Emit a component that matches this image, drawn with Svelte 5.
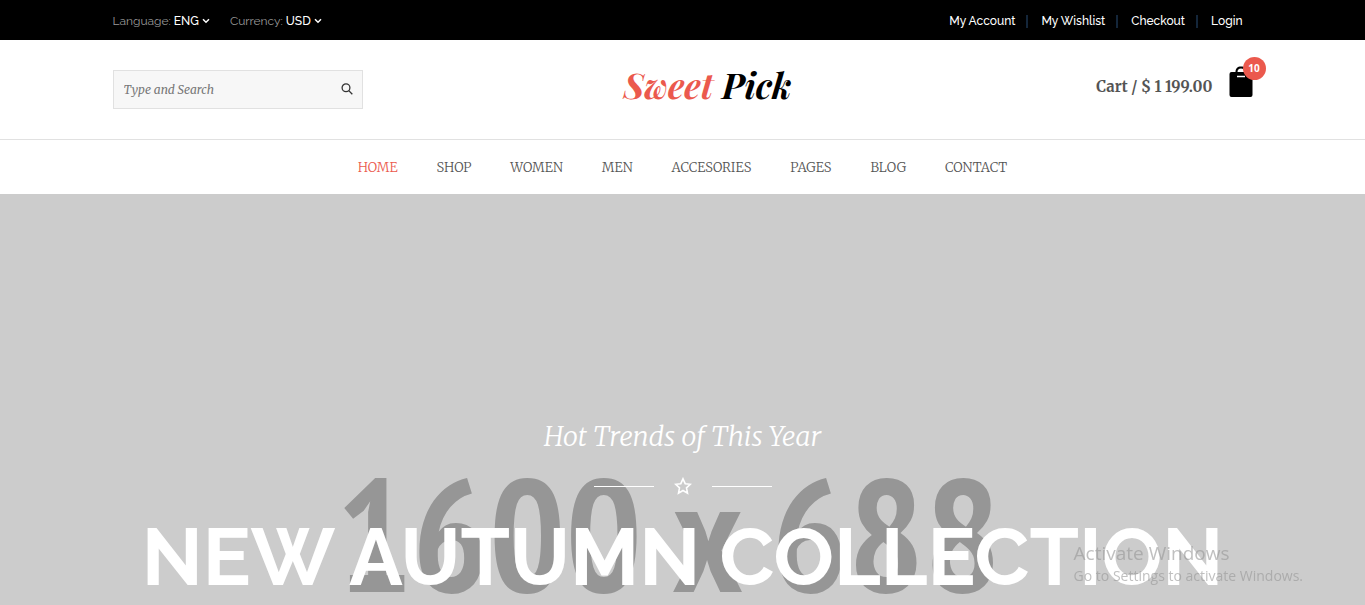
<script>
  const pickers = [
    { id: 'language', label: 'Language:', options: ['ENG', 'GER', 'FRA'] },
    { id: 'currency', label: 'Currency:', options: ['USD', 'EUR', 'GBP'] }
  ];
  const account = ['My Account', 'My Wishlist', 'Checkout', 'Login'];
  const menu = ['Home', 'Shop', 'Women', 'Men', 'Accesories', 'Pages', 'Blog', 'Contact'];
</script>

<div class="page">
  <div class="topbar">
    <div class="container topbar-row">
      <div class="pickers">
        {#each pickers as p}
          <div class="picker">
            <label for={p.id}>{p.label}</label>
            <select id={p.id}>
              {#each p.options as o}<option>{o}</option>{/each}
            </select>
            <svg class="chevron" viewBox="0 0 8 6" aria-hidden="true"><path d="M1 1.2 4 4.2 7 1.2" /></svg>
          </div>
        {/each}
      </div>
      <ul class="account">
        {#each account as a}<li><a href="#top">{a}</a></li>{/each}
      </ul>
    </div>
  </div>

  <header>
    <div class="container header-row">
      <form class="search" onsubmit={(e) => e.preventDefault()}>
        <input type="search" placeholder="Type and Search" aria-label="Search" />
        <button type="submit" aria-label="Submit search">
          <svg viewBox="0 0 12 12" aria-hidden="true"><circle cx="5" cy="4.8" r="3.9" /><path d="m7.8 7.6 3.5 3.6" /></svg>
        </button>
      </form>
      <a class="logo" href="#top"><span>Sweet</span> Pick</a>
      <a class="cart" href="#top">
        <span>Cart / $ 1 199.00</span>
        <span class="bag">
          <svg viewBox="0 0 24 32" aria-hidden="true">
            <path d="M2.5 7H6.5C6.5 3.5 8.5 1.5 12 1.5S17.5 3.5 17.5 7H21.5Q23.5 7 23.5 9V30Q23.5 32 21.5 32H2.5Q.5 32 .5 30V9Q.5 7 2.5 7ZM8.5 7H15.5C15.5 4.7 14.3 3.5 12 3.5S8.5 4.7 8.5 7Z" fill-rule="evenodd" />
            <path d="M8 11.5h8" stroke="#fff" stroke-width="1.5" />
          </svg>
          <b class="count">10</b>
        </span>
      </a>
    </div>
  </header>

  <nav aria-label="Main">
    <ul>
      {#each menu as m, i}<li><a href="#top" class:active={i === 0}>{m}</a></li>{/each}
    </ul>
  </nav>

  <main class="hero">
    <div class="dimensions">1600 x 688</div>
    <div class="caption">
      <p>Hot Trends of This Year</p>
      <div class="divider">
        <svg viewBox="0 0 18 18" aria-hidden="true"><path d="m9 1.8 2.2 4.9 5.1.6-3.8 3.5 1 5.3L9 13.5l-4.5 2.6 1-5.3L1.7 7.3l5.1-.6Z" /></svg>
      </div>
      <h1>NEW AUTUMN COLLECTION</h1>
    </div>
  </main>

  <aside class="notice">
    <strong>Activate Windows</strong>
    <span>Go to Settings to activate Windows.</span>
  </aside>
</div>

<style>
  :global(body) { margin: 0; }
  .page {
    display: flex;
    flex-direction: column;
    min-height: 100vh;
    background: #fff;
    color: #545454;
    font-family: Raleway, Lato, sans-serif;
    font-size: 12px;
  }
  a { color: inherit; text-decoration: none; }
  ul { display: flex; margin: 0; padding: 0; list-style: none; }
  svg { display: block; }
  .container { box-sizing: border-box; width: 100%; max-width: 1140px; margin: 0 auto; }

  .topbar { background: #000; color: #fff; }
  .topbar-row {
    display: flex;
    justify-content: space-between;
    align-items: center;
    min-height: 40px;
    padding-top: 2px;
    box-sizing: border-box;
  }
  .pickers { display: flex; gap: 20px; }
  .picker { display: flex; align-items: center; gap: 3px; }
  .picker label { color: #999; }
  select {
    appearance: none;
    field-sizing: content;
    margin: 0;
    padding: 0;
    border: 0;
    background: #000;
    color: #fff;
    font: inherit;
    font-weight: 500;
  }
  .chevron { width: 8px; height: 6px; fill: none; stroke: #fff; stroke-width: 1.5; }
  .account { padding-right: 10px; font-weight: 500; }
  .account li { line-height: 13px; }
  .account li + li { margin-left: 11px; padding-left: 13px; border-left: 2px solid #14263a; }

  .header-row {
    display: grid;
    grid-template-columns: 250px 1fr 200px;
    align-items: center;
    min-height: 99px;
  }
  .search {
    display: flex;
    box-sizing: border-box;
    height: 39px;
    border: 1px solid #e1e1e1;
    background: #f7f7f7;
  }
  .search input {
    flex: 1;
    min-width: 0;
    padding: 0 10px;
    border: 0;
    background: none;
    font: italic 12px Merriweather, "Liberation Serif", serif;
  }
  .search input::placeholder { color: #777; }
  .search button { padding: 0 9px 2px; border: 0; background: none; }
  .search svg { width: 12px; height: 12px; fill: none; stroke: #333; stroke-width: 1.3; }
  .logo {
    justify-self: center;
    color: #000;
    font: italic bold 35px/48px "Playfair Display", "Liberation Serif", serif;
    padding-bottom: 10px;
  }
  .logo span { color: #eb594d; }
  .cart {
    display: flex;
    justify-content: flex-end;
    align-items: center;
    gap: 16px;
    padding-bottom: 18px;
    font: bold 15px/20px Merriweather, "Liberation Serif", serif;
    white-space: nowrap;
  }
  .cart > span:first-child { padding-top: 12px; }
  .bag { position: relative; }
  .bag svg { width: 24px; height: 32px; }
  .count {
    position: absolute;
    top: -8px;
    right: -13px;
    width: 23px;
    border-radius: 50%;
    background: #eb594d;
    color: #fff;
    font: bold 10px/23px "Open Sans", sans-serif;
    text-align: center;
  }

  nav { border-top: 1px solid #e1e1e1; }
  nav ul { justify-content: center; gap: 39px; }
  nav a {
    display: block;
    padding-top: 2px;
    font: 300 13px/52px Merriweather, "Liberation Serif", serif;
    text-transform: uppercase;
  }
  nav a.active { color: #eb594d; }

  .hero { position: relative; flex: 1; overflow: hidden; background: #ccc; color: #fff; }
  .dimensions {
    position: absolute;
    top: 249px;
    left: 0;
    right: 28px;
    color: #969696;
    font: bold 160px/180px "PT Sans Narrow", "Roboto Condensed", "Liberation Sans Narrow", sans-serif;
    text-align: center;
    white-space: nowrap;
  }
  .caption { position: relative; padding-top: 220px; text-align: center; }
  .caption p { margin: 0; font: italic 300 27px/44px Merriweather, "Liberation Serif", serif; }
  .divider { display: flex; justify-content: center; align-items: center; gap: 20px; margin-top: 19px; }
  .divider::before, .divider::after { content: ""; width: 60px; height: 1px; background: #fff; }
  .divider svg { width: 18px; height: 18px; fill: none; stroke: #fff; stroke-width: 1.6; }
  h1 { margin: 12px 0 0; font: bold 80px/100px Raleway, Lato, sans-serif; white-space: nowrap; }

  .notice {
    position: fixed;
    right: 62px;
    bottom: 18px;
    display: flex;
    flex-direction: column;
    color: rgb(150 150 150 / 60%);
    font: 14px/22px "Segoe UI", "Open Sans", sans-serif;
  }
  .notice strong { font-size: 19px; font-weight: 400; line-height: 24px; }
</style>
